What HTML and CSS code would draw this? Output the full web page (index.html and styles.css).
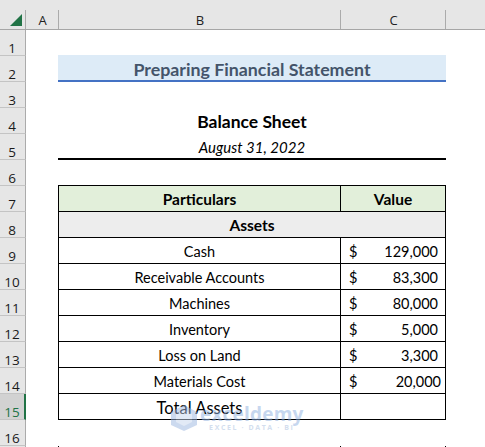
FILE: index.html
```html
<!DOCTYPE html>
<html>
<head>
<meta charset="utf-8">
<link rel="stylesheet" href="styles.css">
</head>
<body>
<div class="sheet">
  <div class="colhead">
    <div class="corner">
      <svg width="13" height="12" viewBox="0 0 13 12"><polygon points="0,12 12,12 12,0" fill="#217346"/></svg>
    </div>
    <div class="ch w-a">A</div>
    <div class="ch w-b">B</div>
    <div class="ch w-c">C</div>
    <div class="ch w-d"></div>
  </div>

  <div class="row"><div class="rh">1</div></div>
  <div class="row"><div class="rh">2</div><div class="w-a"></div><div class="bc title">Preparing Financial Statement</div></div>
  <div class="row"><div class="rh">3</div></div>
  <div class="row"><div class="rh">4</div><div class="w-a"></div><div class="bc heading">Balance Sheet</div></div>
  <div class="row"><div class="rh">5</div><div class="w-a"></div><div class="bc date">August 31, 2022</div></div>
  <div class="row"><div class="rh">6</div><div class="w-a"></div><div class="bc topline"></div></div>
  <div class="row"><div class="rh">7</div><div class="w-a"></div><div class="cb th">Particulars</div><div class="cc th">Value</div></div>
  <div class="row"><div class="rh">8</div><div class="w-a"></div><div class="bc section">Assets</div></div>
  <div class="row"><div class="rh">9</div><div class="w-a"></div><div class="cb">Cash</div><div class="cc val"><span>$</span><span>129,000</span></div></div>
  <div class="row"><div class="rh">10</div><div class="w-a"></div><div class="cb">Receivable Accounts</div><div class="cc val"><span>$</span><span>83,300</span></div></div>
  <div class="row"><div class="rh">11</div><div class="w-a"></div><div class="cb">Machines</div><div class="cc val"><span>$</span><span>80,000</span></div></div>
  <div class="row"><div class="rh">12</div><div class="w-a"></div><div class="cb">Inventory</div><div class="cc val"><span>$</span><span>5,000</span></div></div>
  <div class="row"><div class="rh">13</div><div class="w-a"></div><div class="cb">Loss on Land</div><div class="cc val"><span>$</span><span>3,300</span></div></div>
  <div class="row"><div class="rh">14</div><div class="w-a"></div><div class="cb">Materials Cost</div><div class="cc val wide"><span>$</span><span>20,000</span></div></div>
  <div class="row"><div class="rh sel">15</div><div class="w-a"></div><div class="cb total">Total Assets</div><div class="cc"></div></div>
  <div class="row"><div class="rh">16</div></div>
  <div class="row"><div class="rh"></div><div class="w-a"></div><div class="cb"></div><div class="cc"></div></div>

  <div class="watermark">
    <svg width="30" height="28" viewBox="0 0 30 28">
      <polygon points="15,1 28,8 28,21 15,27 2,21 2,8" fill="#9bb6e0"/>
      <polygon points="15,6 23,10 23,18 15,22 7,18 7,10" fill="#c7d7ef"/>
    </svg>
    <div class="wm-text">
      <div class="wm-name">exceldemy</div>
      <div class="wm-sub">EXCEL · DATA · BI</div>
    </div>
  </div>
</div>
</body>
</html>
```

FILE: styles.css
```css
html, body {
  margin: 0;
  padding: 0;
  background: #ffffff;
}

.sheet {
  position: relative;
  width: 485px;
  height: 447px;
  overflow: hidden;
  font-family: "Lato", "Open Sans", sans-serif;
  color: #000;
}

.colhead {
  display: flex;
  height: 30px;
  box-sizing: border-box;
  border-bottom: 1px solid #a6a6a6;
  background: #e6e6e6;
}

.corner,
.ch {
  box-sizing: border-box;
  height: 29px;
  background: linear-gradient(#ababab, #ababab) right bottom / 1px 19px no-repeat;
}

.corner {
  width: 26px;
  display: flex;
  align-items: flex-end;
  justify-content: flex-end;
  padding: 0 3px 3px 0;
}

.ch {
  display: flex;
  align-items: flex-end;
  justify-content: center;
  font-family: "Open Sans", sans-serif;
  font-size: 13px;
  line-height: 14px;
  padding-bottom: 2px;
  color: #222;
}

.w-a { width: 33px; flex: none; }
.ch.w-a { width: 33px; }
.ch.w-b { width: 282px; }
.ch.w-c { width: 105px; }
.ch.w-d { flex: 1; background: none; }

.row {
  display: flex;
  height: 26px;
}

.rh {
  width: 26px;
  flex: none;
  box-sizing: border-box;
  background: #e6e6e6;
  border-right: 1px solid #ababab;
  border-bottom: 1px solid #c4c4c4;
  display: flex;
  align-items: flex-end;
  justify-content: center;
  font-family: "Open Sans", sans-serif;
  font-size: 13.5px;
  line-height: 14px;
  color: #1a1a1a;
  padding-right: 1px;
}

.rh.sel {
  background: #d2d2d2;
  color: #217346;
  border-right: 2px solid #217346;
  padding-right: 0;
}

.w-a {
  width: 32px;
}

/* merged B:C cell */
.bc {
  width: 388px;
  flex: none;
  box-sizing: border-box;
  display: flex;
  align-items: flex-end;
  justify-content: center;
  font-size: 15px;
  line-height: 18px;
}

.title {
  background: #ddebf7;
  border-bottom: 2px solid #4472c4;
  color: #44546a;
  font-weight: 700;
  font-size: 17.8px;
  line-height: 20px;
  padding-bottom: 1px;
  margin-top: -1px;
  height: 27px;
}

.heading {
  font-weight: 700;
  font-size: 17.5px;
  line-height: 20px;
  padding-bottom: 2px;
}

.date {
  font-style: italic;
  font-size: 15px;
  border-bottom: 2px solid #000;
  padding-bottom: 2px;
}

.topline {
  border-bottom: 1px solid #000;
}

.section {
  background: #ededed;
  border-left: 1px solid #000;
  border-right: 1px solid #000;
  border-bottom: 1px solid #000;
  font-weight: 700;
  font-size: 15.5px;
  padding-bottom: 3px;
}

.cb, .cc {
  flex: none;
  box-sizing: border-box;
  display: flex;
  align-items: flex-end;
  font-size: 14.5px;
  line-height: 18px;
  border-bottom: 1px solid #000;
  border-left: 1px solid #000;
  padding-bottom: 2px;
}

.cb {
  width: 282px;
  justify-content: center;
}

.cc {
  width: 106px;
  border-right: 1px solid #000;
  justify-content: center;
}

.th {
  background: #e2efda;
  font-weight: 700;
  font-size: 15.5px;
  padding-bottom: 3px;
}

.val {
  justify-content: space-between;
  padding-left: 8px;
  padding-right: 7px;
}

.val.wide {
  padding-right: 4px;
}

.total {
  font-size: 16.5px;
  line-height: 20px;
  padding-bottom: 1px;
}

.watermark {
  position: absolute;
  left: 169px;
  top: 404px;
  display: flex;
  align-items: center;
  gap: 1px;
  opacity: 0.5;
  pointer-events: none;
}

.wm-text {
  display: flex;
  flex-direction: column;
  align-items: center;
}

.wm-name {
  font-family: "Open Sans", sans-serif;
  font-weight: 700;
  font-size: 19px;
  line-height: 18px;
  color: #8fb0e0;
  letter-spacing: 0.2px;
}

.wm-sub {
  font-family: "Open Sans", sans-serif;
  font-weight: 700;
  font-size: 7px;
  line-height: 9px;
  letter-spacing: 1.6px;
  color: #a9bfdf;
}
```
